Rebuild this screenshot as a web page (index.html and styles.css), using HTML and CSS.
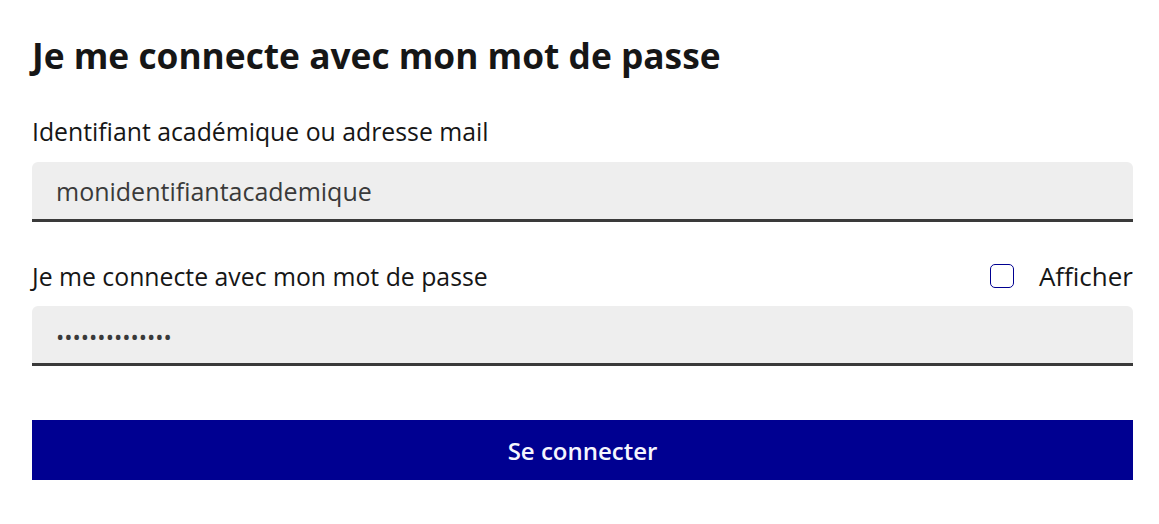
FILE: index.html
```html
<!DOCTYPE html>
<html lang="fr">
<head>
    <meta charset="UTF-8">
    <meta name="viewport" content="width=device-width, initial-scale=1.0">
    <title>Connexion</title>
    <link rel="stylesheet" href="styles.css">
</head>
<body>

<div class="login-container">
    <h2>Je me connecte avec mon mot de passe</h2>
    <form id="loginForm">
        <div class="form-group">
            <label for="username">Identifiant académique ou adresse mail</label>
            <input type="text" id="username" name="username" value="monidentifiantacademique">
        </div>
        <div class="form-group">
            <div class="label-row">
                <label for="password">Je me connecte avec mon mot de passe</label>
                <label class="show-password" for="showPassword">
                    <input type="checkbox" id="showPassword">
                    <span class="box"></span>
                    Afficher
                </label>
            </div>
            <input type="password" id="password" name="password" value="monmotdepasse1">
        </div>
        <button type="submit" class="btn-submit">Se connecter</button>
    </form>
</div>

</body>
</html>
```

FILE: styles.css
```css
body {
    font-family: "Open Sans", Lato, sans-serif;
    background-color: #fff;
    color: #161616;
    margin: 0;
    padding: 0;
}
.login-container {
    padding: 28px 26px 0 32px;
}
h2 {
    font-size: 35.3px;
    font-weight: 700;
    line-height: 54px;
    margin: 0 0 31px;
}
.form-group {
    margin-bottom: 36px;
}
label {
    display: block;
    font-size: 24.8px;
    line-height: 36px;
    margin-bottom: 13px;
}
.label-row {
    display: flex;
    justify-content: space-between;
    align-items: center;
    margin-bottom: 12px;
}
.label-row label {
    margin-bottom: 0;
}
.show-password {
    display: flex;
    align-items: center;
    gap: 25px;
    font-size: 26px;
    cursor: pointer;
}
.show-password input {
    display: none;
}
.box {
    width: 22px;
    height: 22px;
    border: 1px solid #000091;
    border-radius: 5px;
}
input[type="text"],
input[type="password"] {
    display: block;
    width: 100%;
    box-sizing: border-box;
    height: 60px;
    padding: 0 24px;
    font-family: inherit;
    font-size: 25px;
    color: #3a3a3a;
    background-color: #eee;
    border: none;
    border-bottom: 3px solid #3a3a3a;
    border-radius: 6px 6px 0 0;
    outline: none;
}
input[type="password"] {
    font-size: 22px;
    padding-top: 3px;
}
.btn-submit {
    display: block;
    width: 100%;
    height: 60px;
    margin-top: 54px;
    font-family: inherit;
    font-size: 24px;
    font-weight: 600;
    color: #f5f5fe;
    background-color: #000091;
    border: none;
    cursor: pointer;
}
.btn-submit:hover {
    background-color: #1212ff;
}
```
